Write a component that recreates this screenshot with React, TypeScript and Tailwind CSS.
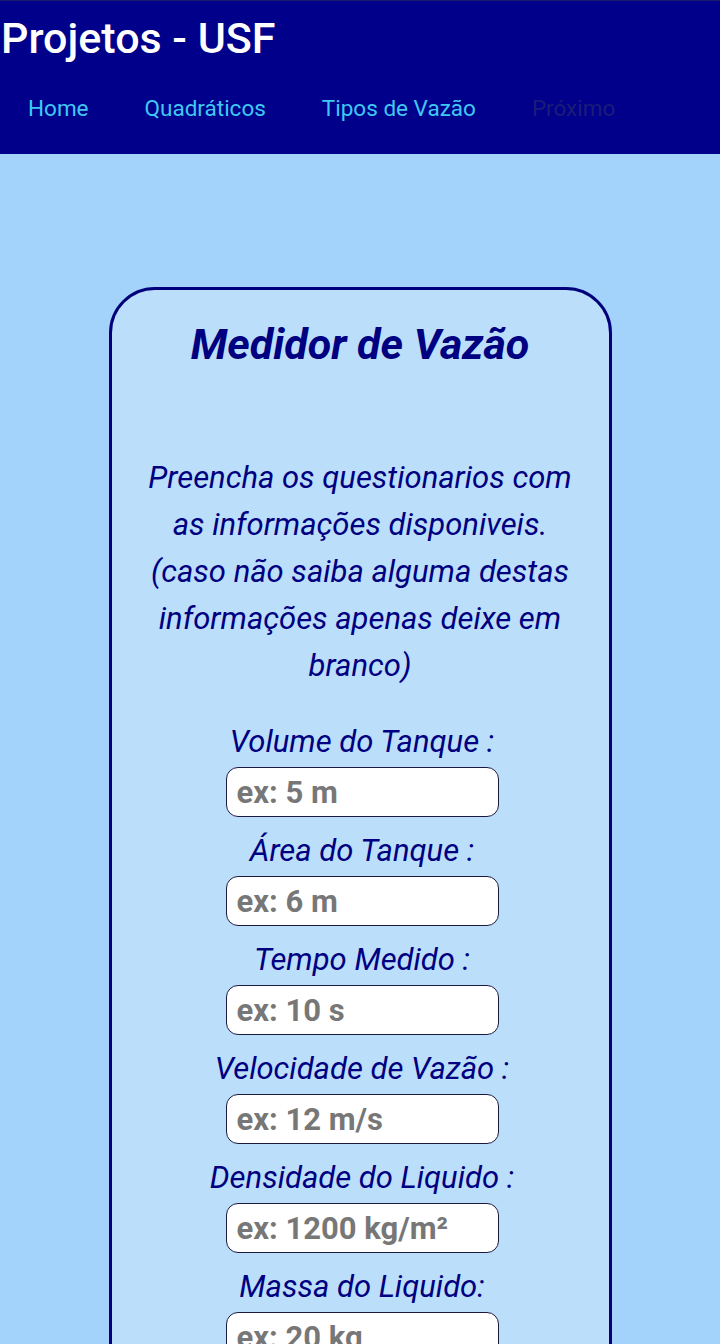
import React from "react";

const fields = [
  { label: "Volume do Tanque :", ph: "ex: 5 m" },
  { label: "Área do Tanque :", ph: "ex: 6 m" },
  { label: "Tempo Medido :", ph: "ex: 10 s" },
  { label: "Velocidade de Vazão :", ph: "ex: 12 m/s" },
  { label: "Densidade do Liquido :", ph: "ex: 1200 kg/m²" },
  { label: "Massa do Liquido:", ph: "ex: 20 kg" },
  { label: "Vazão Mássica :", ph: "ex: 3 kg/s" },
];

export default function App() {
  return (
    <div className="min-h-[1344px] bg-[#a3d2fa] font-['Roboto',sans-serif]">
      <header className="h-[154px] bg-[#00008b] border-t border-[#1a1a6e]">
        <h1 className="pl-[1px] pt-[11px] text-[43px] leading-[52px] text-white font-medium">Projetos - USF</h1>
        <nav className="flex mt-[31px]">
          <a className="px-[28px] text-[22.5px] leading-[26px] text-[#3fc8f4]">Home</a>
          <a className="px-[28px] text-[22.5px] leading-[26px] text-[#3fc8f4]">Quadráticos</a>
          <a className="px-[28px] text-[22.5px] leading-[26px] text-[#3fc8f4]">Tipos de Vazão</a>
          <a className="px-[28px] text-[22.5px] leading-[26px] text-[#1c1c78]">Próximo</a>
        </nav>
      </header>
      <main className="pt-[133px] flex justify-center">
        <div className="w-[503px] border-[3px] border-[#00007a] rounded-[46px] bg-[#bbdefb] px-[30px] pt-[28px] pb-[40px] text-[#000080] text-center">
          <h2 className="text-[43px] leading-[52px] font-bold italic">Medidor de Vazão</h2>
          <p className="mt-[84px] text-[31px] leading-[47px] italic">
            Preencha os questionarios com as informações disponiveis. (caso não saiba alguma destas informações apenas deixe em branco)
          </p>
          <div className="mt-[35px] pl-[4px] flex flex-col items-center">
            {fields.map((f) => (
              <div key={f.label} className="flex flex-col items-center mb-[16px]">
                <label className="text-[31px] leading-[36px] italic whitespace-nowrap">{f.label}</label>
                <input
                  placeholder={f.ph}
                  className="mt-[7px] w-[273px] h-[50px] rounded-[12px] border border-[#1a1a40] bg-white pl-[10px] text-[31px] font-bold placeholder:text-[#777777] outline-none"
                />
              </div>
            ))}
          </div>
        </div>
      </main>
    </div>
  );
}
